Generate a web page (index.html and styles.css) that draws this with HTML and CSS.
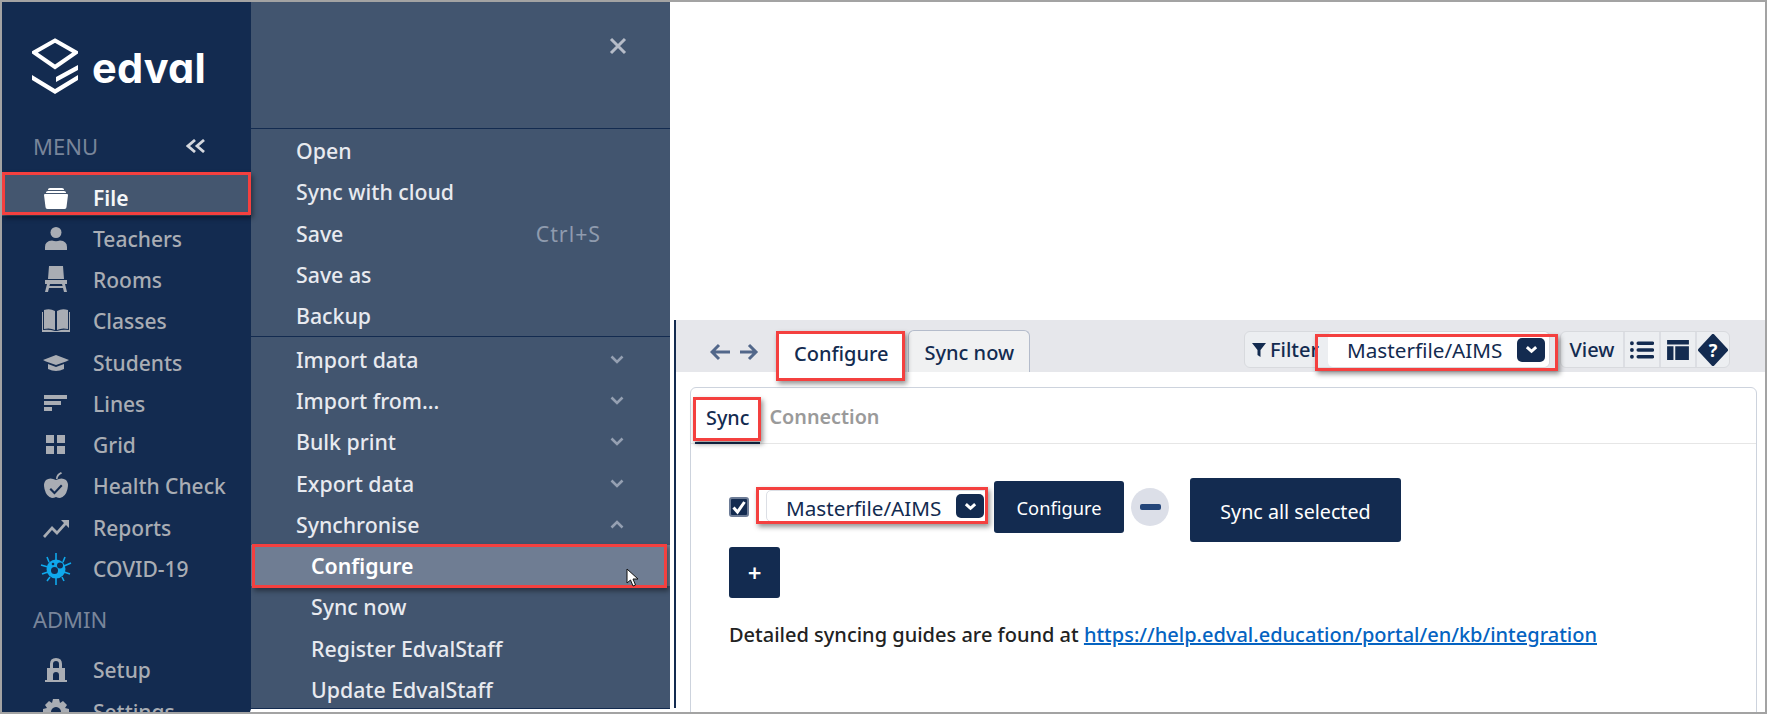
FILE: index.html
```html
<!DOCTYPE html>
<html lang="en">
<head>
<meta charset="utf-8">
<title>Edval - Configure sync</title>
<link rel="stylesheet" href="styles.css">
</head>
<body>
<div class="frame">
  <aside class="sidebar">
    <div class="logo">
      <svg class="logo-mark" viewBox="0 0 46 56" aria-hidden="true">
        <path class="logo-line" d="M23 2.500 44 14.500 23 29 2 14.500Z"/>
        <path class="logo-fill" d="M46 27v5L24 44v-5ZM46 37v5L23 56 0 42v-5l23 14Z"/>
      </svg>
      <span class="logo-text">edval</span>
    </div>
    <div class="nav-head"><span>MENU</span>
      <svg class="collapse" viewBox="0 0 20 14" aria-hidden="true"><path d="M9 1 2 7l7 6M18 1l-7 6 7 6"/></svg>
    </div>
    <nav class="nav">
      <a class="nav-item active">
        <svg class="ico" viewBox="0 0 28 28"><path d="M6 5.500Q6 4 8 4h12q2 0 2 1.500V6H6ZM4 8.500Q4 7 6 7h16q2 0 2 1.500V9H4ZM2 11q0-1 1-1h22q1 0 1 1l-1.500 12q0 2-2 2H5.500q-2 0-2-2Z"/></svg>
        File<span class="mark mark-file"></span></a>
      <a class="nav-item">
        <svg class="ico" viewBox="0 0 28 28"><circle cx="14" cy="7.500" r="5.500"/><path d="M3 25v-3q0-6 7-6.500 4 1.500 8 0 7 .5 7 6.500v3Z"/></svg>
        Teachers</a>
      <a class="nav-item">
        <svg class="ico" viewBox="0 0 28 28"><path d="M7 0h14l1 13H6ZM3 14h22v4h-2l2 8h-3l-1-4H7l-1 4H3l2-8H3ZM8 18l-.6 2h13.200l-.6-2Z"/></svg>
        Rooms</a>
      <a class="nav-item">
        <svg class="ico" viewBox="0 0 28 28"><path d="M2 3q6-2 11 1v19q-5-2.500-11-1ZM15 4q5-3 11-1v19q-6-1.500-11 1ZM0 5h1v18q6-1 12 1h2q6-2 12-1V5h1v20H0Z"/></svg>
        Classes</a>
      <a class="nav-item">
        <svg class="ico" viewBox="0 0 28 28"><path d="M14 6 27 11l-3 1.500L14 16 4 12.500 1 11ZM6 15l8 3 8-3v5q-8 4-16 0Z"/></svg>
        Students</a>
      <a class="nav-item">
        <svg class="ico" viewBox="0 0 28 28"><path d="M2 5h23v4H2ZM2 11h17v4H2ZM2 17h8v4H2Z"/></svg>
        Lines</a>
      <a class="nav-item">
        <svg class="ico" viewBox="0 0 28 28"><path d="M4 4h8v8H4ZM15 4h8v8h-8ZM4 15h8v8H4ZM15 15h8v8h-8Z"/></svg>
        Grid</a>
      <a class="nav-item">
        <svg class="ico" viewBox="0 0 28 28"><path fill-rule="evenodd" d="M14 8q6-3 10 0 3 3 1.500 9-2 8-7.500 9-2 0-4-1-2 1-4 1-5.500-1-7.500-9Q1 11 4 8q4-3 10 0ZM19 12.500l-6.500 7-3.500-3.500-1.500 1.500 5 5 8-8.500ZM14 7q0-5 5-7l1 1.500q-4 1.500-4.500 5.500Z"/></svg>
        Health Check</a>
      <a class="nav-item">
        <svg class="ico" viewBox="0 0 28 28"><path d="M1 22 10 12l5 5 7-8-3-3h8v8l-3-3-9 10-5-5-7 8Z"/></svg>
        Reports</a>
      <a class="nav-item">
        <svg class="ico ico-virus" viewBox="0 0 32 34"><path class="virus-legs" d="M16 8V1M9 10 7 5M23 10l2-5M8 15 1 13M24 14l7-3M8 20l-6 2M24 20l6 2M10 25l-3 4M22 25l2 4M16 26v7"/><circle cx="16" cy="17" r="9.500"/><circle class="virus-eye" cx="20" cy="13.500" r="3"/><circle class="virus-eye" cx="14.500" cy="18.500" r="3.500"/><circle class="virus-eye" cx="13" cy="12" r="1.300"/></svg>
        COVID-19</a>
    </nav>
    <div class="nav-head nav-head-admin"><span>ADMIN</span></div>
    <nav class="nav">
      <a class="nav-item">
        <svg class="ico" viewBox="0 0 28 28"><path fill-rule="evenodd" d="M8 12V8q0-6 6-6t6 6v4h3v12h2v2H3v-2h2V12ZM11 12h6V8q0-3-3-3t-3 3ZM11 24h6v-5q0-3-3-3t-3 3Z"/></svg>
        Setup</a>
      <a class="nav-item">
        <svg class="ico" viewBox="0 0 28 28"><path fill-rule="evenodd" d="M11 1h6l1 4 3-2 4 4-2 3 4 1v6l-4 1 2 3-4 4-3-2-1 4h-6l-1-4-3 2-4-4 2-3-4-1v-6l4-1-2-3 4-4 3 2ZM14 9a5 5 0 1 0 .01 0Z"/></svg>
        Settings</a>
    </nav>
  </aside>

  <section class="panel">
    <header class="panel-head">
      <svg class="close" viewBox="0 0 18 18" aria-hidden="true"><path d="M2 2l14 14M16 2 2 16"/></svg>
    </header>
    <div class="group">
      <a class="panel-item">Open</a>
      <a class="panel-item">Sync with cloud</a>
      <a class="panel-item">Save<span class="shortcut">Ctrl+S</span></a>
      <a class="panel-item">Save as</a>
      <a class="panel-item">Backup</a>
    </div>
    <div class="group">
      <a class="panel-item">Import data<svg class="caret" viewBox="0 0 14 9"><path d="M1.500 1.500 7 7l5.500-5.500"/></svg></a>
      <a class="panel-item">Import from...<svg class="caret" viewBox="0 0 14 9"><path d="M1.500 1.500 7 7l5.500-5.500"/></svg></a>
      <a class="panel-item">Bulk print<svg class="caret" viewBox="0 0 14 9"><path d="M1.500 1.500 7 7l5.500-5.500"/></svg></a>
      <a class="panel-item">Export data<svg class="caret" viewBox="0 0 14 9"><path d="M1.500 1.500 7 7l5.500-5.500"/></svg></a>
      <a class="panel-item">Synchronise<svg class="caret" viewBox="0 0 14 9"><path d="M1.500 7.500 7 2l5.500 5.500"/></svg></a>
      <a class="panel-item sub current">Configure<span class="mark mark-sub"></span>
        <svg class="cursor" viewBox="0 0 13 19"><path d="M1 1v14l3.500-3 2.500 6 2.500-1-2.500-6h5Z"/></svg></a>
      <a class="panel-item sub">Sync now</a>
      <a class="panel-item sub">Register EdvalStaff</a>
      <a class="panel-item sub">Update EdvalStaff</a>
    </div>
  </section>

  <main class="main">
    <div class="app">
      <div class="toolbar">
        <svg class="arrows" viewBox="0 0 50 20" aria-hidden="true"><path d="M9 3 2 10l7 7M2 10h18M39 3l7 7-7 7M46 10H30"/></svg>
        <div class="tab tab-active">Configure<span class="mark mark-tab"></span></div>
        <div class="tab">Sync now</div>
        <div class="tools">
          <div class="tool-group">
            <span class="filter">
              <svg class="filter-ico" viewBox="0 0 14 14"><path d="M0 0h14L8.500 7v7l-3-2V7Z"/></svg>Filter
            </span>
            <div class="select select-top">
              <span>Masterfile/AIMS</span>
              <span class="chev"><svg viewBox="0 0 14 9"><path d="M2 2l5 4.500L12 2"/></svg></span>
              <span class="mark mark-select-top"></span>
            </div>
          </div>
          <div class="view-group">
            <span class="view-cell view-label">View</span>
            <span class="view-cell">
              <svg class="view-ico" viewBox="0 0 25 20"><path class="list-dots" d="M2 3h.01M2 10h.01M2 17h.01"/><path class="list-bars" d="M8.500 3h15M8.500 10h15M8.500 17h15"/></svg>
            </span>
            <span class="view-cell">
              <svg class="view-ico" viewBox="0 0 24 22"><path d="M0 0h24v5H0ZM0 7h7v15H0ZM9 7h15v15H9Z"/></svg>
            </span>
            <span class="view-cell view-cell-last">
              <svg class="help" viewBox="0 0 30 32"><path d="M15 2 28 16 15 30 2 16Z" class="help-bg"/></svg>
              <span class="help-q">?</span>
            </span>
          </div>
        </div>
      </div>

      <div class="card">
        <div class="card-tabs">
          <span class="card-tab card-tab-active">Sync<span class="mark mark-sync"></span></span>
          <span class="card-tab">Connection</span>
        </div>
        <div class="card-body">
          <div class="sync-row">
            <span class="check"><svg viewBox="0 0 16 16"><path d="M2.500 8.500 6.500 13 13.500 3"/></svg></span>
            <div class="select select-row">
              <span>Masterfile/AIMS</span>
              <span class="chev"><svg viewBox="0 0 14 9"><path d="M2 2l5 4.500L12 2"/></svg></span>
              <span class="mark mark-select-row"></span>
            </div>
            <button class="btn btn-config">Configure</button>
            <span class="minus"><span class="minus-bar"></span></span>
            <button class="btn btn-sync">Sync all selected</button>
          </div>
          <button class="btn btn-add">+</button>
          <p class="guide">Detailed syncing guides are found at <a class="guide-link">https://help.edval.education/portal/en/kb/integration</a></p>
        </div>
      </div>
    </div>
  </main>
</div>
</body>
</html>
```
FILE: styles.css
```css
* { box-sizing: border-box; }
html, body { margin: 0; padding: 0; background: #fff; }
body { font-family: "Noto Sans", "Open Sans", "DejaVu Sans", sans-serif; }

.frame {
  width: 1767px; height: 714px;
  border: 2px solid #a3a3a3;
  display: flex;
  overflow: hidden;
  background: #fff;
}

/* annotation rectangles */
.mark {
  position: absolute;
  border: 3px solid #f4403f;
  box-shadow: 2px 3px 5px rgba(0,0,0,.42);
  pointer-events: none;
  z-index: 3;
}
.mark-file { left: 0; right: -1px; top: -3px; bottom: 1px; }
.mark-sub { left: 1px; right: 3px; top: -1px; bottom: -2px; }
.mark-tab { left: -3px; right: -2px; top: -1px; bottom: -9px; }
.mark-select-top { left: -13px; right: -9px; top: 2px; bottom: -4px; }
.mark-select-row { left: -11px; right: -1px; top: -4px; bottom: -3px; }
.mark-sync { left: -2px; right: -1px; top: 9px; bottom: 1px; }

/* sidebar */
.sidebar {
  width: 248px; flex: none;
  background: #132b50;
  color: #a9adb4;
  font-size: 21px;
  font-weight: 500;
}
.logo { height: 123px; padding: 36px 0 0 30px; display: flex; align-items: flex-start; }
.logo-mark { width: 46px; height: 56px; flex: none; }
.logo-line { fill: none; stroke: #fff; stroke-width: 4; }
.logo-fill { fill: #fff; }
.logo-text {
  font-family: Inter, "Liberation Sans", sans-serif;
  font-feature-settings: "cv11";
  font-weight: 700; font-size: 41.500px; line-height: 50px;
  color: #fff; margin: 5px 0 0 14px; letter-spacing: .2px;
}
.nav-head {
  height: 41px; padding: 0 44px 0 31px;
  display: flex; align-items: center; justify-content: space-between;
  color: #79859a; font-size: 22px; font-weight: 400;
}
.nav-head-admin { margin-top: 8px; height: 42px; }
.collapse { width: 20px; height: 14px; fill: none; stroke: #d5d8de; stroke-width: 2.800; }
.nav { display: flex; flex-direction: column; }
.nav:first-of-type { margin-top: 9px; }
.nav-head-admin + .nav { margin-top: 10px; }
.nav-item {
  position: relative;
  height: 41.3px; flex: none;
  padding-left: 38px;
  display: flex; align-items: center; gap: 21px;
}
.nav-item.active {
  height: 41px; padding-top: 5px; margin-bottom: 2px;
  background: #44566f; color: #f5f6f8; font-weight: 600;
}
.ico { width: 32px; height: 28px; flex: none; fill: currentColor; }
.nav-item.active .ico { fill: #fff; }
.ico-virus { fill: #0fa8ec; height: 34px; }
.virus-legs { stroke: #0fa8ec; stroke-width: 1.600; fill: none; }
.virus-eye { fill: #132b50; }

/* slide-out panel */
.panel {
  width: 420px; flex: none;
  background: #42556f;
  border-left: 1px solid #132b50;
  border-bottom: 3px solid #fff;
  color: #e8eaef;
  font-size: 21.300px;
  font-weight: 500;
}
.panel-head {
  height: 127px; padding: 35px 0 0 0;
  border-bottom: 1px solid #132b50;
  display: flex; justify-content: flex-end; align-items: flex-start;
}
.close { width: 18px; height: 18px; margin-right: 43px; fill: none; stroke: #b6bcc8; stroke-width: 3; }
.group { border-bottom: 1px solid #132b50; padding-top: 1px; }
.group:last-child { border-bottom: 1px solid #132b50; height: 372px; overflow: hidden; padding-top: 1px; }
.panel-item {
  position: relative;
  height: 41.3px; padding: 0 46px 0 45px;
  display: flex; align-items: center; justify-content: space-between;
}
.panel-item.sub { padding-left: 60px; justify-content: flex-start; }
.panel-item.current { background: #6f7d93; color: #fff; font-weight: 600; }
.shortcut { color: #8f9bae; font-weight: 400; margin-right: 23px; letter-spacing: 1px; }
.caret { width: 14px; height: 9px; fill: none; stroke: #95a0b2; stroke-width: 2.600; }
.cursor {
  position: absolute; right: 31px; bottom: -1px;
  width: 13px; height: 19px;
  fill: #fff; stroke: #111; stroke-width: 1; z-index: 4;
}

/* main */
.main { flex: 1; min-width: 0; padding: 318px 0 4px 4px; display: flex; }
.app {
  flex: 1; min-width: 0;
  border-left: 2px solid #132b50;
  display: flex; flex-direction: column;
  color: #132b50;
  font-size: 20px;
}
.toolbar {
  height: 52px; flex: none;
  background: #e6e7eb;
  display: flex; align-items: flex-end;
  padding: 0 35px 0 34px;
}
.arrows {
  width: 50px; height: 20px; align-self: center; margin: 12px 18px 0 0;
  fill: none; stroke: #52678a; stroke-width: 3;
}
.tab {
  position: relative;
  height: 42px; padding: 2px 15px 0 15px;
  display: flex; align-items: center;
  background: #f0f1f2;
  border: 1px solid #b4bccb; border-bottom: 0;
  border-radius: 6px 6px 0 0;
  margin-right: 4px;
  font-weight: 500;
}
.tab-active { height: 41px; background: #fff; border-color: #fff; padding: 2px 15px 0; }
.tools { margin-left: auto; align-self: flex-start; padding-top: 11px; display: flex; gap: 10px; }
.tool-group {
  display: flex; height: 37px; width: 306px;
  background: #eceef1; border: 1px solid #d8dade; border-radius: 6px;
}
.filter { display: flex; align-items: center; padding-left: 7px; width: 83px; font-weight: 500; flex: none; overflow: hidden; }
.filter-ico { width: 14px; height: 14px; flex: none; fill: #132b50; margin-right: 4px; }
.select {
  position: relative;
  background: #fff; display: flex; align-items: center;
  border-radius: 5px;
}
.select-top { flex: 1; padding: 0 4px 0 19px; justify-content: space-between; font-weight: 400; font-size: 20.700px; }
.select-row {
  width: 222px; height: 32px; margin: 12px 0 0 17px;
  padding: 0 3px 0 19px;
  justify-content: space-between;
  border: 1px solid #dcdfe5;
  font-weight: 400; font-size: 20.700px;
}
.select-row > span:first-child { padding-top: 3px; }
.chev {
  width: 28px; height: 24px; flex: none;
  background: #132b50; border-radius: 5px;
  display: flex; align-items: center; justify-content: center;
}
.chev svg { width: 13px; height: 9px; fill: none; stroke: #fff; stroke-width: 3.200; }
.view-group {
  display: flex; height: 37px; width: 170px;
  background: #eceef1; border: 1px solid #d8dade; border-radius: 6px;
}
.view-cell {
  position: relative;
  display: flex; align-items: center; justify-content: center;
  border-right: 2px solid #dcdee3;
  width: 36px;
}
.view-label { width: 64px; font-weight: 500; }
.view-cell-last { border-right: 0; flex: 1; }
.view-ico { width: 24px; height: 20px; fill: #132b50; }
.list-dots, .list-bars { fill: none; stroke: #132b50; stroke-linecap: round; }
.list-dots { stroke-width: 4; }
.list-bars { stroke-width: 3.500; }
.help { width: 30px; height: 32px; }
.help-bg { fill: #132b50; stroke: #132b50; stroke-width: 4; stroke-linejoin: round; }
.help-q {
  position: absolute; inset: 0;
  display: flex; align-items: center; justify-content: center;
  color: #fff; font-size: 18px; font-weight: 700;
}

.card {
  flex: 1;
  margin: 15px 8px -12px 14px;
  border: 1px solid #cdd3dd; border-radius: 6px;
  background: #fff;
}
.card-tabs { height: 56px; display: flex; gap: 9px; padding-left: 4px; border-bottom: 1px solid #e6e6e6; }
.card-tab {
  position: relative;
  padding: 0 11px; display: flex; align-items: center;
  color: #9a9a9a; font-weight: 600; height: 56px; font-size: 19.800px;
}
.card-tab + .card-tab { padding: 0; }
.card-tab-active { color: #132b50; font-weight: 500; border-bottom: 2px solid #132b50; padding-top: 4px; }
.card-body { padding: 34px 0 0 38px; }
.sync-row { display: flex; align-items: flex-start; }
.check {
  width: 20px; height: 20px; margin-top: 19px; flex: none;
  background: #132b50; border: 2px solid #6d7c96; border-radius: 3px;
  display: flex;
}
.check svg { width: 16px; height: 16px; fill: none; stroke: #fff; stroke-width: 3; }
.btn {
  font: inherit; color: #fff; background: #132b50;
  border: 0; border-radius: 3px; padding: 0;
  display: block;
}
.btn-config { width: 130px; height: 52px; margin: 3px 0 0 6px; font-size: 18.300px; padding-top: 1px; }
.minus {
  width: 38px; height: 38px; margin: 10px 0 0 7px;
  background: #dcdfe8; border-radius: 50%; flex: none;
  display: flex; align-items: center; justify-content: center;
}
.minus-bar { width: 21px; height: 6px; background: #24467a; border-radius: 2px; }
.btn-sync { width: 211px; height: 64px; margin-left: 21px; font-size: 19.700px; padding-top: 2px; }
.btn-add { width: 51px; height: 51px; margin-top: 5px; font-size: 24px; font-weight: 600; }
.guide { margin: 25px 0 0; line-height: 24px; color: #222; font-size: 20px; font-weight: 500; }
.guide-link { color: #0563c1; text-decoration: underline; }
```
